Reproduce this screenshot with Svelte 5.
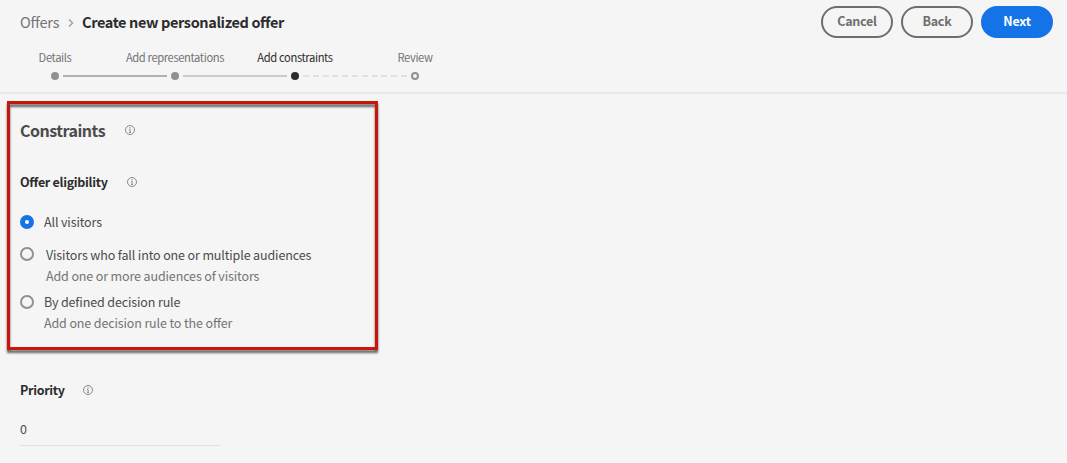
<script>
  const steps = [
    { label: 'Details', state: 'done' },
    { label: 'Add representations', state: 'done' },
    { label: 'Add constraints', state: 'current' },
    { label: 'Review', state: 'todo' },
  ];

  const options = [
    { id: 'all', label: 'All visitors' },
    {
      id: 'audiences',
      label: 'Visitors who fall into one or multiple audiences',
      help: 'Add one or more audiences of visitors',
    },
    {
      id: 'rule',
      label: 'By defined decision rule',
      help: 'Add one decision rule to the offer',
    },
  ];

  let selected = $state('all');
  let priority = $state('0');
</script>

{#snippet info()}
  <svg class="info" viewBox="0 0 10 10" aria-hidden="true">
    <circle cx="5" cy="5" r="4.5" fill="none" stroke="currentColor" stroke-width="0.8" />
    <circle cx="5" cy="2.8" r="0.65" fill="currentColor" />
    <path d="M4.2 4.5H5.1V7.4M4.1 7.4H6" fill="none" stroke="currentColor" stroke-width="0.8" />
  </svg>
{/snippet}

<div class="page">
  <header>
    <div class="left">
      <nav class="crumbs">
        <span class="parent">Offers</span>
        <svg class="chevron" viewBox="0 0 6 8" aria-hidden="true">
          <path d="M1 0.4L4.6 4L1 7.6" fill="none" stroke="currentColor" stroke-width="1.4" />
        </svg>
        <h1>Create new personalized offer</h1>
      </nav>
      <ol class="steps">
        {#each steps as step, i}
          <li class="step {step.state}">
            <span class="step-label">{step.label}</span>
            <span class="dot"></span>
            {#if i < steps.length - 1}
              <span class="line line-{i}"></span>
            {/if}
          </li>
        {/each}
      </ol>
    </div>
    <div class="actions">
      <button>Cancel</button>
      <button>Back</button>
      <button class="primary">Next</button>
    </div>
  </header>

  <main>
    <section class="constraints">
      <div class="title-row">
        <h2>Constraints</h2>
        {@render info()}
      </div>
      <div class="title-row sub">
        <h3 class="eligibility">Offer eligibility</h3>
        {@render info()}
      </div>
      <div class="options">
        {#each options as option}
          <label class="option {option.id}">
            <input type="radio" name="eligibility" value={option.id} bind:group={selected} />
            <span class="text">
              <span class="name">{option.label}</span>
              {#if option.help}
                <span class="help">{option.help}</span>
              {/if}
            </span>
          </label>
        {/each}
      </div>
    </section>

    <section class="priority">
      <div class="title-row">
        <h3>Priority</h3>
        {@render info()}
      </div>
      <input class="field" type="text" aria-label="Priority" bind:value={priority} />
    </section>
  </main>
</div>

<style>
  :global(body) {
    background: #f5f5f5;
  }

  .page {
    height: 463px;
    overflow: hidden;
    background: #f5f5f5;
    color: #4b4b4b;
    font-family: "Noto Sans CJK JP", "Noto Sans", sans-serif;
    font-size: 13px;
    font-feature-settings: "liga" 1;
    white-space: nowrap;
  }

  h1,
  h2,
  h3,
  ol {
    margin: 0;
    padding: 0;
  }

  header {
    box-sizing: border-box;
    height: 94px;
    display: flex;
    justify-content: space-between;
    border-bottom: 2px solid #e8e8e8;
  }

  .crumbs {
    display: flex;
    align-items: center;
    height: 24px;
    padding: 10px 0 0 20px;
    font-size: 14.5px;
    line-height: 24px;
  }

  .parent {
    width: 39px;
    letter-spacing: -0.2px;
    color: #747474;
  }

  .chevron {
    width: 6px;
    height: 8px;
    margin: 2px 8px 0 9px;
    color: #a0a0a0;
  }

  h1 {
    font-size: 14.5px;
    font-weight: 700;
    letter-spacing: -0.38px;
    color: #2c2c2c;
  }

  .steps {
    display: flex;
    margin-top: 16px;
    margin-left: -5px;
    list-style: none;
  }

  .step {
    position: relative;
    width: 120px;
    display: flex;
    flex-direction: column;
    align-items: center;
    color: #747474;
  }

  .step-label {
    height: 16px;
    font-size: 11.2px;
    line-height: 15px;
    letter-spacing: -0.38px;
  }

  .dot {
    box-sizing: border-box;
    width: 8px;
    height: 8px;
    margin-top: 6px;
    border-radius: 50%;
    background: #909090;
  }

  .line {
    position: absolute;
    left: 68px;
    top: 25px;
    width: 104px;
    height: 2px;
    background: #b1b1b1;
  }

  .line-1 {
    background: #cacaca;
  }

  .current {
    color: #2c2c2c;
  }

  .current .dot {
    background: #2c2c2c;
  }

  .current .line {
    background: repeating-linear-gradient(90deg, #e1e1e1 0 6px, transparent 6px 9.8px);
  }

  .todo .dot {
    background: #f5f5f5;
    border: 2px solid #909090;
  }

  .actions {
    display: flex;
    gap: 8px;
    padding: 6px 14px 0 0;
  }

  button {
    box-sizing: border-box;
    width: 72px;
    height: 32px;
    padding: 0 0 2px;
    border: 2px solid #6e6e6e;
    border-radius: 16px;
    background: transparent;
    color: #6e6e6e;
    font: 700 12.5px/26px "Noto Sans CJK JP", "Noto Sans", sans-serif;
    letter-spacing: -0.25px;
  }

  .primary {
    border-color: #1473e6;
    background: #1473e6;
    color: #fff;
  }

  main {
    padding: 7px 0 0 7px;
  }

  .constraints {
    position: relative;
    box-sizing: border-box;
    width: 371px;
    height: 249px;
    padding: 17px 13px 0;
  }

  /* highlight frame, shadowed on its inner and outer edges */
  .constraints::before {
    content: "";
    position: absolute;
    inset: 0;
    border: 3px solid #c9150a;
    filter: drop-shadow(0 3px 1px rgba(0, 0, 0, 0.6));
    pointer-events: none;
  }

  .title-row {
    display: flex;
    align-items: center;
    height: 24px;
  }

  h2 {
    width: 85px;
    font-size: 16px;
    line-height: 24px;
    letter-spacing: -0.5px;
    color: #4b4b4b;
  }

  h3 {
    width: 44px;
    font-size: 12.5px;
    line-height: 20px;
    letter-spacing: -0.3px;
    color: #2c2c2c;
  }

  .eligibility {
    width: 88px;
  }

  .info {
    width: 10px;
    height: 10px;
    margin-left: 20px;
    margin-bottom: 1px;
    color: #6e6e6e;
  }

  .sub {
    margin-top: 28px;
  }

  .sub .info,
  .priority .info {
    margin-left: 19px;
  }

  .options {
    padding-top: 18px;
  }

  .option {
    display: flex;
    align-items: flex-start;
    gap: 10px;
    height: 48px;
  }

  .option.all {
    height: 32px;
  }

  .option.audiences .text {
    margin: 1px 0 0 2px;
  }

  .option input {
    appearance: none;
    box-sizing: border-box;
    width: 14px;
    height: 14px;
    margin: 3px 0 0;
    border: 2px solid #909090;
    border-radius: 50%;
  }

  .option input:checked {
    border: 5px solid #1473e6;
    background: #fff;
  }

  .text {
    display: flex;
    flex-direction: column;
    font-size: 12.5px;
    line-height: 20px;
    letter-spacing: -0.13px;
  }

  .help {
    margin-top: 1px;
    color: #747474;
  }

  .priority {
    padding: 28px 13px 0;
  }

  .field {
    box-sizing: border-box;
    display: block;
    width: 200px;
    height: 32px;
    margin-top: 12px;
    padding: 0 0 2px;
    border: 0;
    border-bottom: 1px solid #e1e1e1;
    background: transparent;
    color: #4b4b4b;
    font: 400 12.5px "Noto Sans CJK JP", "Noto Sans", sans-serif;
  }
</style>
